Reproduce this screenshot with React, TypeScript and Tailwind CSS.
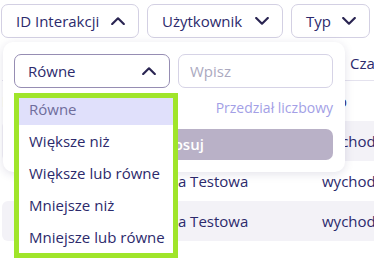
import React from "react";

function Chevron({ up = false }: { up?: boolean }) {
  return (
    <svg width="14" height="8" viewBox="0 0 14 8" fill="none" className="shrink-0">
      <path
        d={up ? "M1.2 7L7 1.3L12.8 7" : "M1.2 1L7 6.7L12.8 1"}
        stroke="#2a2552"
        strokeWidth="2.2"
        strokeLinecap="round"
        strokeLinejoin="round"
      />
    </svg>
  );
}

function FilterButton({ label, className, up }: { label: string; className: string; up?: boolean }) {
  return (
    <button
      className={`h-[34px] flex items-center justify-between pl-[14px] pr-[13px] bg-white border border-[#d3d0e3] rounded-[7px] ${className}`}
    >
      <span>{label}</span>
      <Chevron up={up} />
    </button>
  );
}

const options = ["Równe", "Większe niż", "Większe lub równe", "Mniejsze niż", "Mniejsze lub równe"];

export default function App() {
  return (
    <div className="relative w-[374px] h-[264px] overflow-hidden bg-white font-['Open_Sans',sans-serif] text-[15px] text-[#2c2a6c]">
      {/* filter bar */}
      <div className="flex gap-2 pl-[1px] pt-1">
        <FilterButton label="ID Interakcji" className="w-[138px]" up />
        <FilterButton label="Użytkownik" className="w-[136px]" />
        <FilterButton label="Typ" className="w-[79px] shrink-0" />
      </div>

      {/* table behind */}
      <div className="mt-[9px] ml-[2px] w-[420px]">
        <div className="h-[34px] flex items-center pl-[348px] border-b border-[#e4e2ee] whitespace-nowrap">Czas rozpoczęcia</div>
        <div className="h-[40px] grid grid-cols-[148px_172px_1fr] items-center whitespace-nowrap">
          <span>ID</span>
          <span>Użytkownik</span>
          <span>Typ</span>
        </div>
        {[true, false, true].map((gray, i) => (
          <div
            key={i}
            className={`h-[40px] grid grid-cols-[148px_172px_1fr] items-center rounded-md whitespace-nowrap ${gray ? "bg-[#f3f2f7]" : ""}`}
          >
            <span className="pl-3">{1024 + i}</span>
            <span>Anna Testowa</span>
            <span>wychodzące</span>
          </div>
        ))}
      </div>

      {/* popover */}
      <div className="absolute left-[3px] top-[42px] w-[342px] h-[130px] rounded-[10px] bg-white shadow-[0_2px_10px_rgba(40,30,90,0.13)] pt-[12px] pl-[11px] pr-[12px]">
        <div className="flex gap-2">
          <div className="w-[156px] h-[34px] flex items-center justify-between pl-[13px] pr-[13px] border border-[#968db3] rounded-[7px]">
            <span>Równe</span>
            <Chevron up />
          </div>
          <input
            className="w-[155px] h-[34px] px-[11px] border border-[#d6d3e6] rounded-[7px] outline-none placeholder:text-[#aba9c0]"
            placeholder="Wpisz"
          />
        </div>
        <div className="mt-[10px] h-[20px] text-right text-[14px] leading-[20px] text-[#a39fe6]">Przedział liczbowy</div>
        <button className="mt-[11px] w-full h-[31px] rounded-[7px] bg-[#b9b1c7] text-white font-semibold">Zastosuj</button>
      </div>

      {/* dropdown list */}
      <div className="absolute left-[14px] top-[93px] w-[164px] h-[165px] bg-white pb-[5px]">
        {options.map((o, i) => (
          <div
            key={o}
            className={`h-[32px] flex items-center px-[15px] whitespace-nowrap ${i === 0 ? "bg-[#e0e0fb] text-[#6f6d9c]" : ""}`}
          >
            {o}
          </div>
        ))}
        <div className="absolute inset-0 border-[5px] border-[#a0e52a] pointer-events-none" />
      </div>
    </div>
  );
}
